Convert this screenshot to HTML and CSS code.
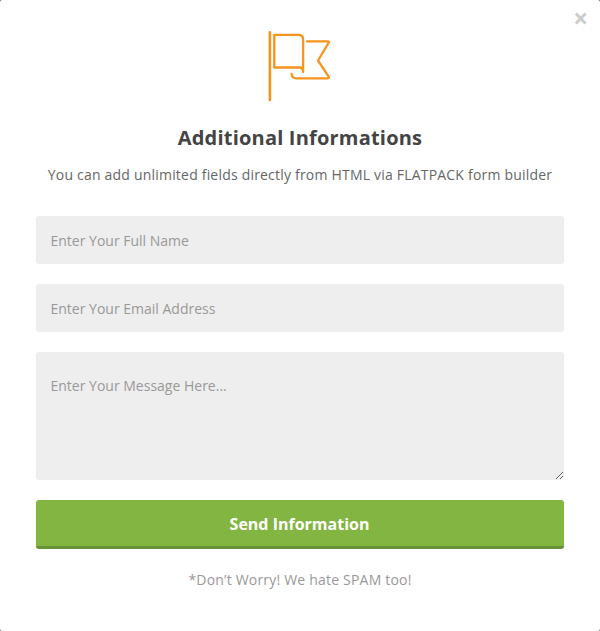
FILE: index.html
```html
<!DOCTYPE html>
<html lang="en">
<head>
<meta charset="utf-8">
<title>Additional Informations</title>
<link rel="stylesheet" href="styles.css">
</head>
<body>
<main class="modal">
<button class="close" type="button" aria-label="Close">×</button>
<svg class="flag" width="64" height="74" viewBox="0 0 64 74" fill="none" stroke="#f7941d" stroke-width="2.3" stroke-linecap="round" stroke-linejoin="round"><path stroke-width="2.6" d="M1.9 3.3V71"/><path d="M6.3 5.8H30.5Q35.1 5.8 35.1 10.5V43Q35.1 38.5 31.5 38.5H6.3Z"/><path d="M39 12.3H60Q61.5 12.5 60.5 14L50 31.5L60.5 47.3Q61.5 49.3 60 49.3H28.5Q23.6 49.3 23.6 44.8"/></svg>
<h1 class="title">Additional Informations</h1>
<p class="intro">You can add unlimited fields directly from HTML via FLATPACK form builder</p>
<form class="form">
<input class="field" type="text" placeholder="Enter Your Full Name">
<input class="field" type="email" placeholder="Enter Your Email Address">
<textarea class="field message" placeholder="Enter Your Message Here..."></textarea>
<button class="send" type="button">Send Information</button>
</form>
<p class="note">*Don’t Worry! We hate SPAM too!</p>
</main>
</body>
</html>
```
FILE: styles.css
```css
* { box-sizing: border-box; }
body { margin: 0; background: #555; font-family: "Open Sans", sans-serif; font-size: 14px; }
.modal { position: relative; height: 631px; padding: 29px 36px 0; background: #fff; border-radius: 2px; text-align: center; }
.close { position: absolute; top: 5px; right: 12px; padding: 0; border: 0; background: none; color: #ccc; font: 700 26px/27px "Open Sans", sans-serif; }
.flag { display: block; margin: 0 auto; }
.title { margin: 21px 0 0; color: #444; font-size: 20px; line-height: 28px; font-weight: 700; letter-spacing: .2px; }
.intro { margin: 12px 0 0; color: #666; line-height: 22px; letter-spacing: .2px; }
.form { display: flex; flex-direction: column; gap: 20px; margin-top: 30px; }
.field { width: 100%; height: 48px; margin: 0; padding: 0 14.5px; border: 0; border-radius: 3px; background: #eee; color: #666; font: 14px "Open Sans", sans-serif; }
.field::placeholder { color: #999; opacity: 1; }
.message { display: block; height: 128px; padding: 24px 14.5px; resize: both; }
.send { height: 49px; padding: 2px 1px 0 0; border: 0; border-bottom: 3px solid #689236; border-radius: 3px; background: #82b541; color: #fff; font: 700 16px "Open Sans", sans-serif; }
.note { margin: 20px 0 0; color: #999; line-height: 22px; letter-spacing: .2px; }
```
